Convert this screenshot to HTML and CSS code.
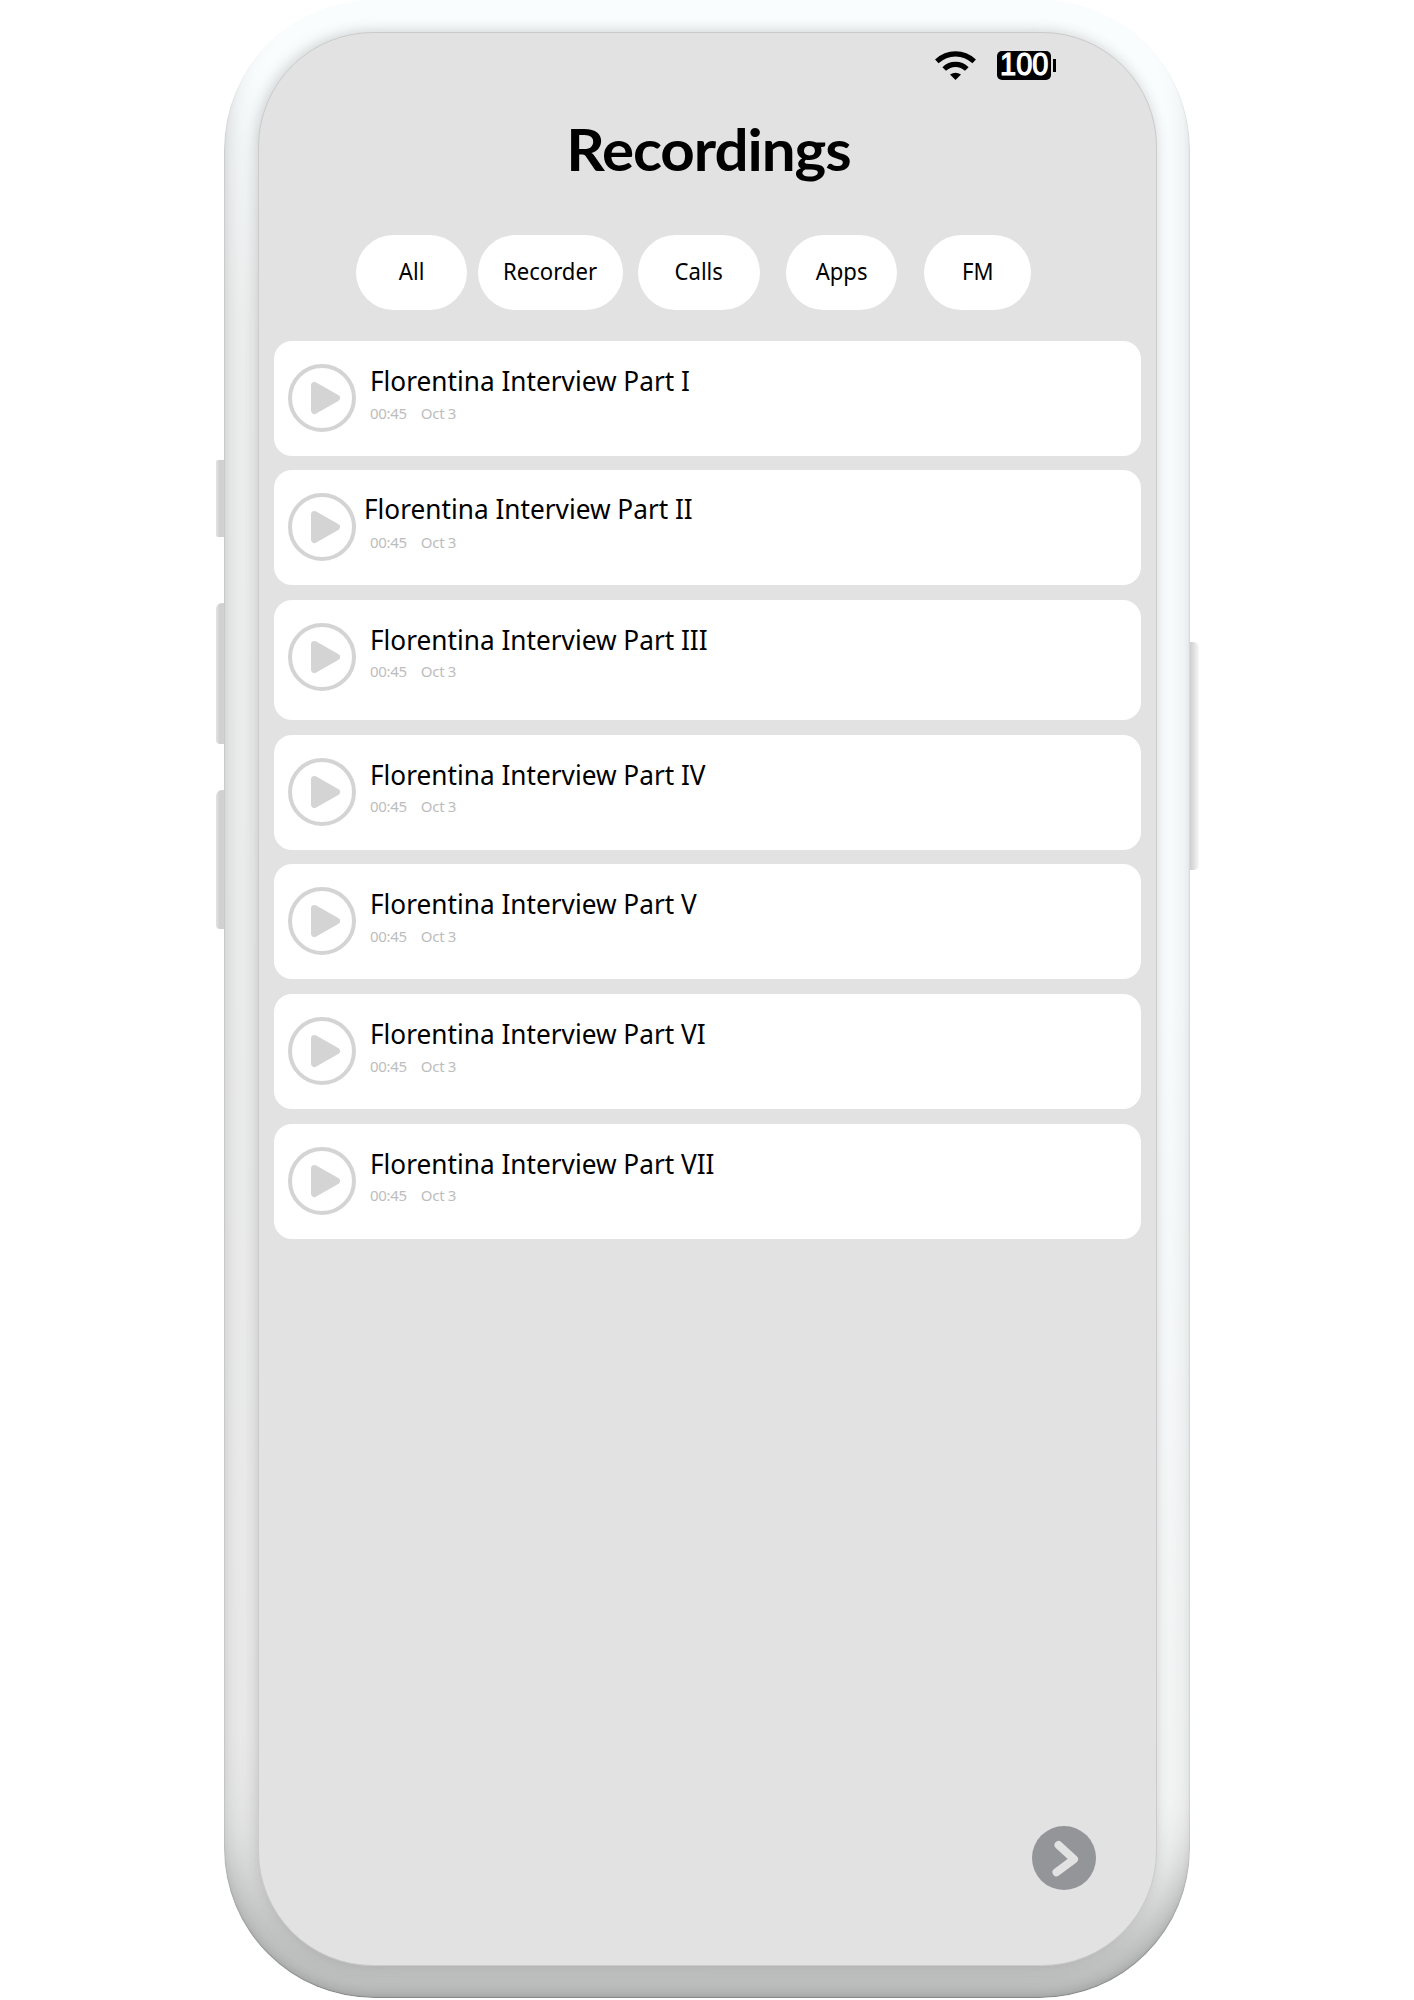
FILE: index.html
```html
<!DOCTYPE html>
<html lang="en">
<head>
<meta charset="utf-8">
<title>Recordings</title>
<link rel="stylesheet" href="styles.css">
</head>
<body>
<svg class="defs" aria-hidden="true">
  <symbol id="play" viewBox="0 0 68 68">
    <circle cx="34" cy="34" r="32" fill="none" stroke="#d3d4d3" stroke-width="4"/>
    <path d="M26.500 21.500 L48.500 34 L26.500 46.500 Z" fill="#d3d4d3" stroke="#d3d4d3" stroke-width="7" stroke-linejoin="round"/>
  </symbol>
</svg>
<div class="phone">
  <i class="key key-mute"></i>
  <i class="key key-up"></i>
  <i class="key key-down"></i>
  <i class="key key-power"></i>
  <main class="screen">
    <div class="status">
      <svg class="wifi" viewBox="0 0 41 29">
        <g fill="none" stroke="#000" stroke-width="5.200">
          <path d="M1.800 10.300 Q10 2.800 20.500 2.800 T39.200 10.300"/>
          <path d="M9.200 18 Q14 13.300 20.500 13.300 T31.800 18"/>
        </g>
        <path d="M15 23.500 Q20.500 19.800 26 23.500 L20.500 29 Z"/>
      </svg>
      <div class="battery"><span class="level">100</span></div>
    </div>
    <h1 class="title">Recordings</h1>
    <nav class="filters">
      <a class="pill all"><span>All</span></a>
      <a class="pill recorder"><span>Recorder</span></a>
      <a class="pill calls"><span>Calls</span></a>
      <a class="pill apps"><span>Apps</span></a>
      <a class="pill fm"><span>FM</span></a>
    </nav>
    <ul class="list">
      <li class="card"><svg class="play"><use href="#play"/></svg><div class="info"><h2 class="name">Florentina Interview Part I</h2><p class="meta"><span>00:45</span><span>Oct 3</span></p></div></li>
      <li class="card second"><svg class="play"><use href="#play"/></svg><div class="info"><h2 class="name">Florentina Interview Part II</h2><p class="meta"><span>00:45</span><span>Oct 3</span></p></div></li>
      <li class="card third"><svg class="play"><use href="#play"/></svg><div class="info"><h2 class="name">Florentina Interview Part III</h2><p class="meta"><span>00:45</span><span>Oct 3</span></p></div></li>
      <li class="card"><svg class="play"><use href="#play"/></svg><div class="info"><h2 class="name">Florentina Interview Part IV</h2><p class="meta"><span>00:45</span><span>Oct 3</span></p></div></li>
      <li class="card"><svg class="play"><use href="#play"/></svg><div class="info"><h2 class="name">Florentina Interview Part V</h2><p class="meta"><span>00:45</span><span>Oct 3</span></p></div></li>
      <li class="card"><svg class="play"><use href="#play"/></svg><div class="info"><h2 class="name">Florentina Interview Part VI</h2><p class="meta"><span>00:45</span><span>Oct 3</span></p></div></li>
      <li class="card"><svg class="play"><use href="#play"/></svg><div class="info"><h2 class="name">Florentina Interview Part VII</h2><p class="meta"><span>00:45</span><span>Oct 3</span></p></div></li>
    </ul>
    <svg class="next" viewBox="0 0 64 64">
      <circle cx="32" cy="32" r="32" fill="#949599"/>
      <path d="M26.500 19 L42 33.300 L24.500 46.300" fill="none" stroke="#e2e2e2" stroke-width="8" stroke-linecap="round" stroke-linejoin="round"/>
    </svg>
  </main>
</div>
</body>
</html>
```
FILE: styles.css
```css
* { box-sizing: border-box; margin: 0; padding: 0; }
body { background: #fff; font-family: "Noto Sans", "Open Sans", sans-serif; color: #000; height: 2000px; overflow: hidden; }
.defs { position: absolute; width: 0; height: 0; }

.phone {
  position: relative;
  width: 966px;
  height: 1998px;
  margin-left: 224px;
  padding: 32px 33px 32px 34px;
  border-radius: 150px;
  background:
    linear-gradient(180deg, rgba(243, 244, 244, 0), #f3f4f4 200px, #f0f0f0 1600px, #dcdddd) 0 130px / 50% 1868px no-repeat,
    linear-gradient(180deg, #f9fdfe 50%, #f4f5f5 90%, #dcdddd);
  box-shadow:
    inset 0 -1px 1px rgba(0, 0, 0, .12),
    inset -1px -1px 1px rgba(0, 0, 0, .05),
    inset 1px -1px 1px rgba(0, 0, 0, .05),
    inset 0 -8px 8px -4px rgba(80, 84, 82, .22),
    inset 4px -48px 36px -8px #b9bbba;
}
.screen {
  position: relative;
  display: flex;
  flex-direction: column;
  width: 899px;
  height: 1934px;
  border-radius: 115px;
  background: #e2e2e2;
  border: 1px solid #cbcbcb;
  box-shadow:
    0 0 12px 1px rgba(120, 115, 115, .17),
    -5px 0 15px 0 rgba(110, 110, 110, .16);
}

.key { position: absolute; width: 8px; left: -8px; background: linear-gradient(90deg, #e2e3e3, #cfcfcf 50%, #d2d2d2); }
.key-mute { top: 460px; height: 77px; border-radius: 2px 0 0 2px; }
.key-up { top: 603px; height: 141px; border-radius: 6px 0 0 4px; }
.key-down { top: 790px; height: 139px; border-radius: 6px 0 0 4px; }
.key-power { left: 966px; top: 642px; height: 228px; width: 9px; border-radius: 0 6px 5px 0; background: linear-gradient(90deg, #cfcfcf, #dedede 40%, #f8f8f8); }

.status { display: flex; gap: 21px; margin: 18px 0 0 676px; height: 29px; }
.wifi { width: 41px; height: 29px; }
.battery { position: relative; width: 54px; height: 29px; border-radius: 5px; background: #000; display: flex; justify-content: center; align-items: center; }
.battery::after { content: ""; position: absolute; left: 56px; top: 8px; width: 3px; height: 13px; background: #000; }
.level { color: #fff; font: 31.500px/27px "Liberation Sans", sans-serif; -webkit-text-stroke: 1.200px #fff; transform: scaleX(.92); margin-top: -3px; }

.title { height: 80px; margin: 29px 0 0 2px; line-height: 80px; text-align: center; font-family: Lato, "Noto Sans", sans-serif; font-weight: 700; font-size: 57px; letter-spacing: -1px; transform: scaleX(1.055); }

.filters { display: flex; margin: 46px 0 0 97px; }
.pill { height: 75px; border-radius: 37.500px; background: #fff; display: flex; align-items: center; justify-content: center; font-size: 23.500px; }
.pill span { margin-top: -3px; transform: scaleX(.94); }
.all { width: 111px; }
.recorder { width: 145px; margin-left: 11px; }
.calls { width: 122px; margin-left: 15px; }
.apps { width: 111px; margin-left: 26px; }
.fm { width: 107px; margin-left: 27px; }

.list { list-style: none; display: flex; flex-direction: column; gap: 14.800px; margin: 31px 0 0 15px; width: 867px; }
.card { display: flex; height: 115px; border-radius: 18px; background: #fff; padding: 23px 0 0 14px; gap: 14px; }
.second { margin-top: -.8px; }
.third { height: 120px; }
.play { width: 68px; height: 68px; flex: none; }
.info { display: flex; flex-direction: column; white-space: nowrap; }
.name { font-weight: 400; font-size: 28px; line-height: 38px; margin-top: -3px; transform: scaleX(.936); transform-origin: 0 0; }
.second .name { margin: -4px 0 1px -6px; }
.meta { display: flex; gap: 14px; font-size: 15px; line-height: 20px; color: #bdbdbd; letter-spacing: -.3px; margin-top: 3.500px; }

.next { width: 64px; height: 64px; margin: auto 60px 75px auto; }
```
